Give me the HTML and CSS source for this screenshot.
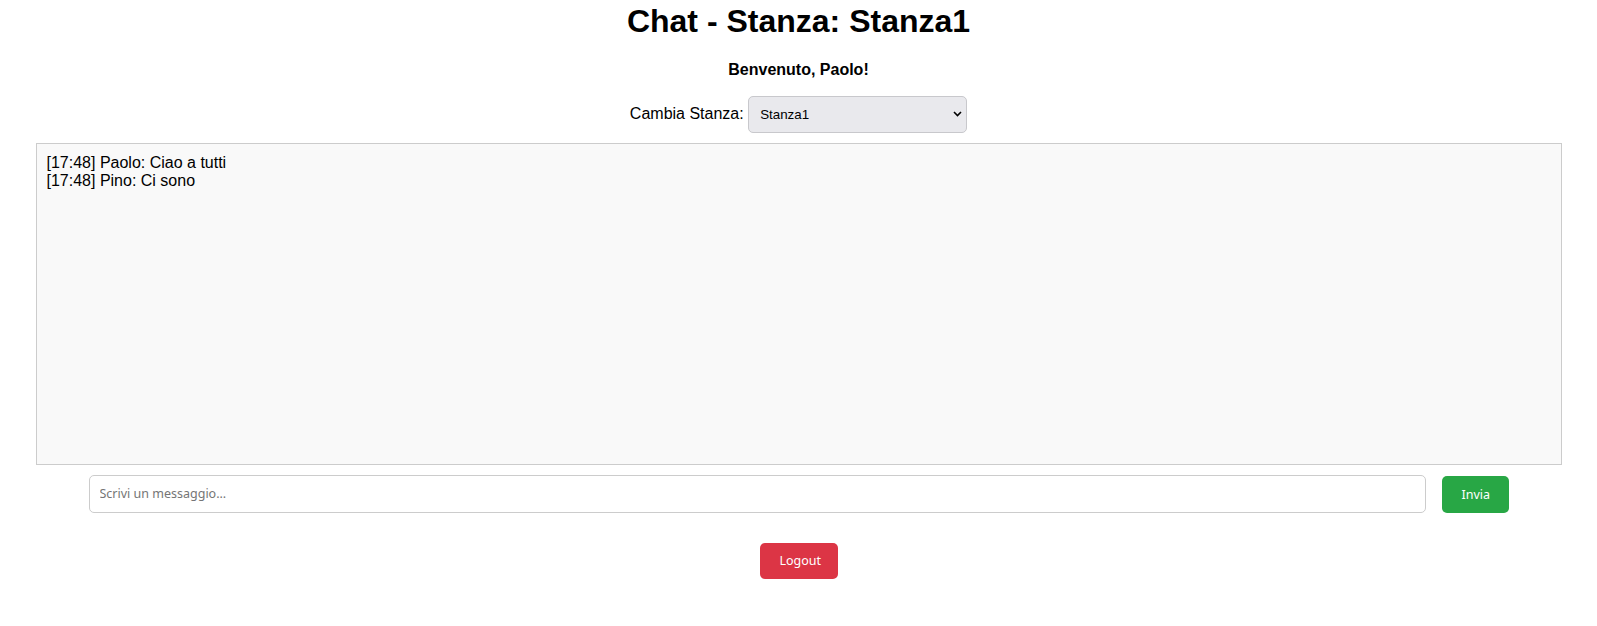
FILE: index.html
```html
<!DOCTYPE html>
<html lang="it">
<head>
<meta charset="utf-8">
<title>Chat - Stanza: Stanza1</title>
<link rel="stylesheet" href="styles.css">
</head>
<body>
<h1 class="title">Chat - Stanza: Stanza1</h1>
<p class="welcome">Benvenuto, Paolo!</p>
<div class="room-row">
  <label class="room-label" for="room">Cambia Stanza:</label>
  <span class="select-wrap">
    <select id="room" class="room-select">
      <option>Stanza1</option>
      <option>Stanza2</option>
      <option>Stanza3</option>
    </select>
    <svg class="select-arrow" width="9" height="6" viewBox="0 0 9 6" aria-hidden="true">
      <path d="M1 1 L4.5 4.5 L8 1" fill="none" stroke="#000" stroke-width="1.6"/>
    </svg>
  </span>
</div>
<div class="chat-box">
  <div class="msg">[17:48] Paolo: Ciao a tutti</div>
  <div class="msg">[17:48] Pino: Ci sono</div>
</div>
<form class="send-row">
  <input class="msg-input" type="text" placeholder="Scrivi un messaggio...">
  <button class="btn btn-send" type="button">Invia</button>
</form>
<div class="logout-row">
  <button class="btn btn-logout" type="button">Logout</button>
</div>
</body>
</html>
```

FILE: styles.css
```css
html, body {
  background: #ffffff;
}
body {
  margin: 0 8px;
  font-family: "Liberation Sans", Arial, sans-serif;
  color: #000;
  text-align: center;
}
.title {
  font-size: 32px;
  font-weight: bold;
  margin: 3px 0 21.44px;
  line-height: 37px;
}
.welcome {
  font-size: 16px;
  font-weight: bold;
  margin: 0 0 16px;
  line-height: 18.4px;
}
.room-row {
  margin: 0 0 10px;
  font-size: 16px;
  line-height: 18.4px;
}
.room-label {
  font-size: 16px;
}
.select-wrap {
  position: relative;
  display: inline-block;
}
.room-select {
  -webkit-appearance: none;
  appearance: none;
  box-sizing: border-box;
  width: 219px;
  height: 37px;
  padding: 0 24px 0 11px;
  font-family: "Liberation Sans", Arial, sans-serif;
  font-size: 13.33px;
  color: #000;
  background-color: #e9e9ed;
  border: 1px solid #c8c8cc;
  border-radius: 5px;
  vertical-align: baseline;
  cursor: pointer;
}
.select-arrow {
  position: absolute;
  right: 5px;
  top: 50%;
  margin-top: -3px;
  pointer-events: none;
}
.chat-box {
  box-sizing: border-box;
  width: 1526px;
  height: 322px;
  margin: 0 auto;
  padding: 10px;
  border: 1px solid #cccccc;
  background: #f9f9f9;
  text-align: left;
  overflow-y: auto;
  font-size: 16px;
  line-height: 18.4px;
}
.send-row {
  display: flex;
  gap: 16px;
  width: 1420px;
  margin: 10px auto 0;
}
.msg-input {
  flex: 1;
  box-sizing: border-box;
  height: 38px;
  padding: 0 10px;
  border: 1px solid #cccccc;
  border-radius: 5px;
  font-family: "Noto Sans", sans-serif;
  font-size: 12.5px;
  color: #000;
  background: #fff;
  outline: none;
}
.msg-input::placeholder {
  color: #757575;
}
.btn {
  box-sizing: border-box;
  border: none;
  border-radius: 5px;
  padding: 0 20px;
  font-family: "Noto Sans", sans-serif;
  font-size: 12.5px;
  color: #fff;
  cursor: pointer;
}
.btn-send {
  width: 67px;
  height: 37px;
  margin-top: 1px;
  background: #28a745;
}
.logout-row {
  margin-top: 30px;
  display: flex;
  justify-content: center;
}
.btn-logout {
  width: 78px;
  height: 36px;
  background: #dc3545;
}
```
